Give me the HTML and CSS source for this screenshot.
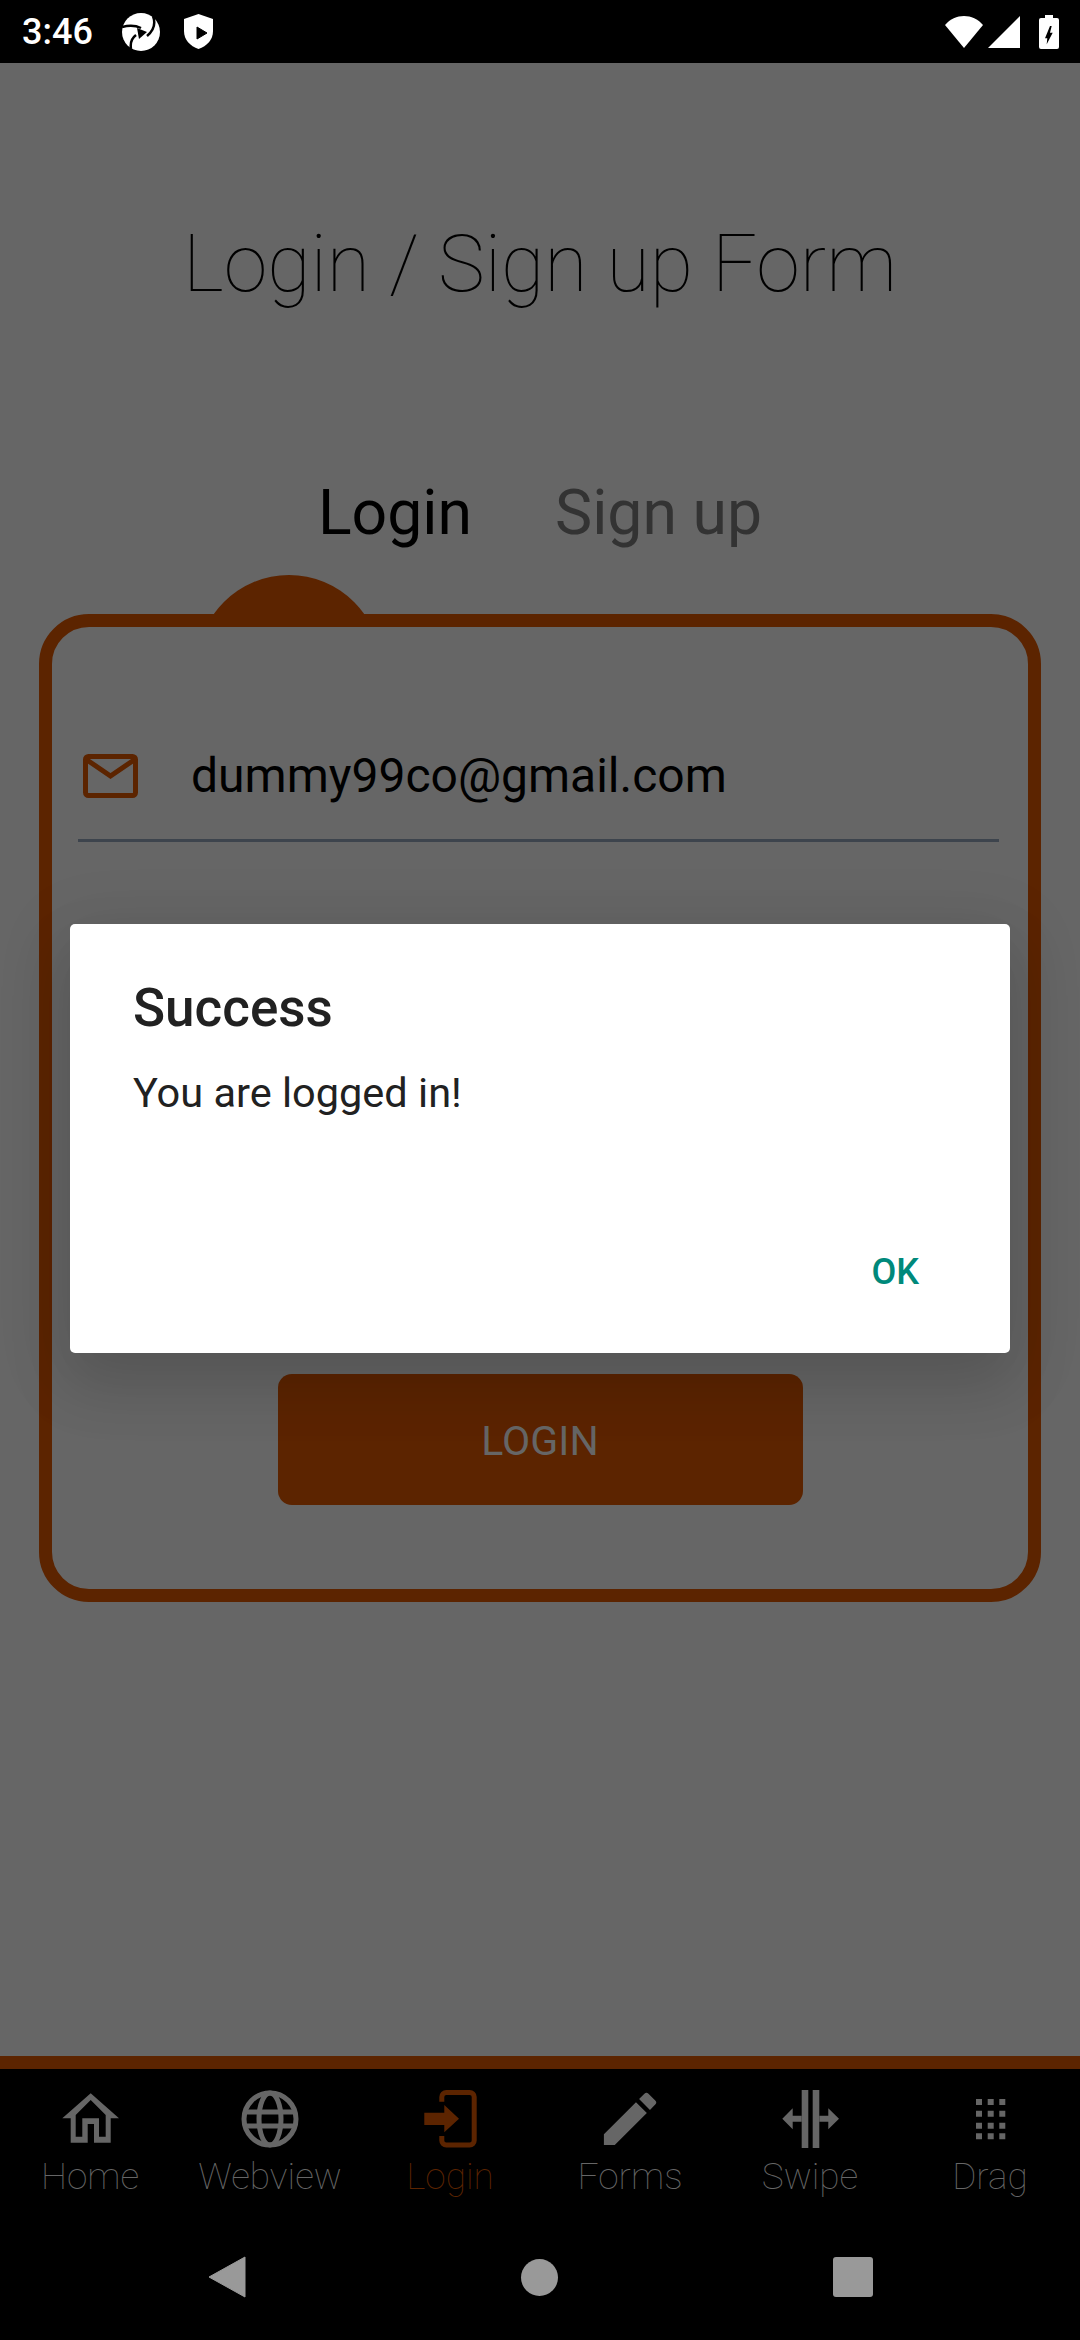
FILE: index.html
```html
<!DOCTYPE html>
<html lang="en">
<head>
    <meta charset="UTF-8">
    <title>Login</title>
    <link rel="stylesheet" href="styles.css">
</head>
<body>
    <div class="status-bar">
        <span class="clock">3:46</span>
        <svg class="status-app" width="38" height="38" viewBox="0 0 38 38">
            <circle cx="19" cy="19" r="19" fill="#fff"/>
            <path d="M31 3C34 11 31 18 25 23M0 14C7 12 13 12 19 15M9 36C8 30 10 25 14 22" fill="none" stroke="#000" stroke-width="2.500"/>
            <path d="M15 15 25 19 17 26z" fill="#000"/>
        </svg>
        <svg class="status-shield" width="29" height="35" viewBox="0 0 29 35">
            <path d="M14.5 0 29 5V17C29 26 23 32 14.5 35 6 32 0 26 0 17V5z" fill="#fff"/>
            <path d="M13 13 23 19 13 25z" fill="#000" stroke="#000" stroke-linejoin="round"/>
        </svg>
        <span class="status-spacer"></span>
        <svg class="status-wifi" width="38" height="32" viewBox="0 0 38 32">
            <path d="M19 32 0 9C5 3 12 0 19 0S33 3 38 9z" fill="#fff"/>
        </svg>
        <svg class="status-signal" width="32" height="32" viewBox="0 0 32 32">
            <path d="M32 0V32H0z" fill="#fff"/>
        </svg>
        <svg width="20" height="34" viewBox="0 0 20 34">
            <path d="M6 0h8v3h4a2 2 0 0 1 2 2v27a2 2 0 0 1-2 2H2a2 2 0 0 1-2-2V5a2 2 0 0 1 2-2h4z" fill="#fff"/>
            <path d="M11 11 6 23.3H8.300L7.700 29.300 13.700 17.700H11L12.700 11z" fill="#000"/>
        </svg>
    </div>

    <main class="screen">
        <h1 class="title">Login / Sign up Form</h1>

        <div class="tabs">
            <span class="tab tab-active">Login</span>
            <span class="tab">Sign up</span>
        </div>

        <section class="card">
            <span class="card-bump"></span>
            <div class="field">
                <svg class="field-icon" width="55" height="44" viewBox="0 0 55 44">
                    <rect x="2.500" y="2.500" width="50" height="39" rx="3" fill="none" stroke="#5c2400" stroke-width="5"/>
                    <path d="M4 6 27.500 22 51 6" fill="none" stroke="#5c2400" stroke-width="5"/>
                </svg>
                <span class="field-value">dummy99co@gmail.com</span>
            </div>
            <button class="login-btn">LOGIN</button>
        </section>
    </main>

    <div class="dialog">
        <h2 class="dialog-title">Success</h2>
        <p class="dialog-text">You are logged in!</p>
        <div class="dialog-actions">
            <span class="dialog-ok">OK</span>
        </div>
    </div>

    <nav class="tabbar">
        <div class="tabbar-item">
            <svg width="58" height="58" viewBox="0 0 58 58">
                <path fill-rule="evenodd" d="M29.700 3.300 58 28.300H49.700V52.700H33V34H26.700V52.700H9.700V28.300H1.300zM29.700 10 14.700 25V46.700H21.300V28.300H38V46.700H44.700V25z" fill="#666"/>
            </svg>
            <span>Home</span>
        </div>
        <div class="tabbar-item">
            <svg width="58" height="58" viewBox="0 0 58 58">
                <circle cx="29" cy="29" r="26" fill="none" stroke="#666" stroke-width="5"/>
                <ellipse cx="29" cy="29" rx="11" ry="26" fill="none" stroke="#666" stroke-width="5"/>
                <path d="M3 22H55M3 36H55" fill="none" stroke="#666" stroke-width="5"/>
            </svg>
            <span>Webview</span>
        </div>
        <div class="tabbar-item tabbar-active">
            <svg width="58" height="58" viewBox="0 0 58 58">
                <path d="M20.800 11.700V7A4.500 4.500 0 0 1 25.300 2.500H48.700A4.500 4.500 0 0 1 53.200 7V50.500A4.500 4.500 0 0 1 48.700 55H25.300A4.500 4.500 0 0 1 20.800 50.500V46" fill="none" stroke="#5c2400" stroke-width="5"/>
                <path d="M3.300 22.700H23.300V15L38 28.700 23.300 42.300V35H3.300z" fill="#5c2400"/>
            </svg>
            <span>Login</span>
        </div>
        <div class="tabbar-item">
            <svg width="58" height="58" viewBox="2 2 20 20">
                <path d="M3 17.250V21h3.750L17.810 9.940l-3.750-3.750L3 17.250zM20.710 7.040a.996.996 0 0 0 0-1.410l-2.340-2.340a.996.996 0 0 0-1.410 0l-1.830 1.830 3.750 3.750 1.830-1.830z" fill="#666"/>
            </svg>
            <span>Forms</span>
        </div>
        <div class="tabbar-item">
            <svg width="58" height="58" viewBox="0 0 58 58">
                <path d="M20.700 0H27.300V58H20.700zM31.700 0H38.300V58H31.700z" fill="#666"/>
                <path d="M1.300 28.700 11.700 18.300V25.700H20.700V31.700H11.700V39.300zM58 28.700 47.300 18.300V25.700H38.300V31.700H47.300V39.300z" fill="#666"/>
            </svg>
            <span>Swipe</span>
        </div>
        <div class="tabbar-item">
            <svg width="58" height="58" viewBox="0 0 58 58">
                <path d="M15 9h6v6h-6zM26.700 9h6v6h-6zM38.300 9h6v6h-6zM15 20.700h6v6h-6zM26.700 20.700h6v6h-6zM38.300 20.700h6v6h-6zM15 32.700h6v6h-6zM26.700 32.700h6v6h-6zM38.300 32.700h6v6h-6zM15 43.300h6v6h-6zM26.700 43.300h6v6h-6zM38.300 43.300h6v6h-6z" fill="#666"/>
            </svg>
            <span>Drag</span>
        </div>
    </nav>

    <div class="system-nav">
        <svg width="38" height="42" viewBox="0 0 38 42">
            <path d="M37 1V41L1 21z" fill="#999" stroke="#999" stroke-linejoin="round"/>
        </svg>
        <span class="system-home"></span>
        <span class="system-recent"></span>
    </div>
</body>
</html>
```

FILE: styles.css
```css
html, body {
    margin: 0;
    padding: 0;
}

body {
    width: 1080px;
    height: 2340px;
    position: relative;
    overflow: hidden;
    display: flex;
    flex-direction: column;
    background-color: #000;
    font-family: Roboto, "Liberation Sans", sans-serif;
}

.status-bar {
    height: 63px;
    flex: none;
    display: flex;
    align-items: center;
    padding: 0 21px 0 22px;
    background-color: #000;
    color: #fff;
    box-sizing: border-box;
}

.clock {
    width: 100px;
    font-size: 36px;
    font-weight: 500;
}

.status-shield {
    margin-left: 24px;
}

.status-spacer {
    flex: 1;
}

.status-signal {
    margin-left: 5px;
    margin-right: 19px;
}

.screen {
    flex: 1;
    background-color: #666;
    display: flex;
    flex-direction: column;
    align-items: center;
}

.title {
    margin: 141px 0 0;
    height: 120px;
    line-height: 120px;
    font-size: 79px;
    font-weight: 100;
    color: #000;
}

.tabs {
    margin-top: 154px;
    display: flex;
    gap: 83px;
    font-size: 62.5px;
    line-height: 70px;
    color: #333;
}

.tab-active {
    color: #000;
}

.card {
    position: relative;
    margin-top: 66px;
    width: 1002px;
    height: 988px;
    box-sizing: border-box;
    border: 13px solid #5c2400;
    border-radius: 50px;
    display: flex;
    flex-direction: column;
    align-items: center;
}

.card-bump {
    position: absolute;
    left: 162px;
    top: -52px;
    width: 150px;
    height: 39px;
    overflow: hidden;
}

.card-bump::before {
    content: "";
    position: absolute;
    left: -17px;
    top: 0;
    width: 184px;
    height: 184px;
    border-radius: 50%;
    background-color: #5c2400;
}

.field {
    align-self: stretch;
    margin: 114px 29px 0 26px;
    height: 101px;
    box-sizing: border-box;
    display: flex;
    align-items: flex-start;
    border-bottom: 3px solid #3d444d;
}

.field-icon {
    margin: 13px 0 0 5px;
}

.field-value {
    margin-left: 53px;
    font-size: 48px;
    line-height: 70px;
    color: #000;
}

.login-btn {
    margin-top: 532px;
    width: 525px;
    height: 131px;
    padding-top: 3px;
    border: none;
    border-radius: 14px;
    background-color: #5c2400;
    color: #666;
    font-family: Roboto, "Liberation Sans", sans-serif;
    font-size: 41px;
}

.dialog {
    position: absolute;
    left: 70px;
    top: 924px;
    width: 940px;
    height: 429px;
    box-sizing: border-box;
    padding: 54px 91px 0 63px;
    background-color: #fff;
    border-radius: 5px;
    box-shadow: 0 30px 60px 6px rgba(0, 0, 0, 0.1), 0 14px 70px 12px rgba(0, 0, 0, 0.08);
}

.dialog-title {
    margin: 0;
    font-size: 53px;
    line-height: 60px;
    font-weight: 500;
    color: #212121;
}

.dialog-text {
    margin: 30px 0 0;
    font-size: 41.5px;
    line-height: 50px;
    color: #212121;
}

.dialog-actions {
    margin-top: 133px;
    display: flex;
    justify-content: flex-end;
}

.dialog-ok {
    font-size: 36px;
    line-height: 42px;
    font-weight: 500;
    color: #00897b;
}

.tabbar {
    height: 158px;
    flex: none;
    box-sizing: border-box;
    border-top: 13px solid #5c2400;
    background-color: #000;
    display: grid;
    grid-template-columns: repeat(6, 180px);
    padding-top: 21px;
}

.tabbar-item {
    display: flex;
    flex-direction: column;
    align-items: center;
    color: #666;
    font-size: 37px;
    font-weight: 100;
    line-height: 44px;
    gap: 7px;
}

.tabbar-item svg {
    display: block;
}

.tabbar-active {
    color: #5c2400;
}

.system-nav {
    height: 126px;
    flex: none;
    background-color: #000;
    display: flex;
    align-items: center;
    justify-content: center;
    gap: 275px;
}

.system-home {
    width: 37px;
    height: 37px;
    border-radius: 50%;
    background-color: #999;
}

.system-recent {
    width: 40px;
    height: 40px;
    border-radius: 3px;
    background-color: #999;
}
```
